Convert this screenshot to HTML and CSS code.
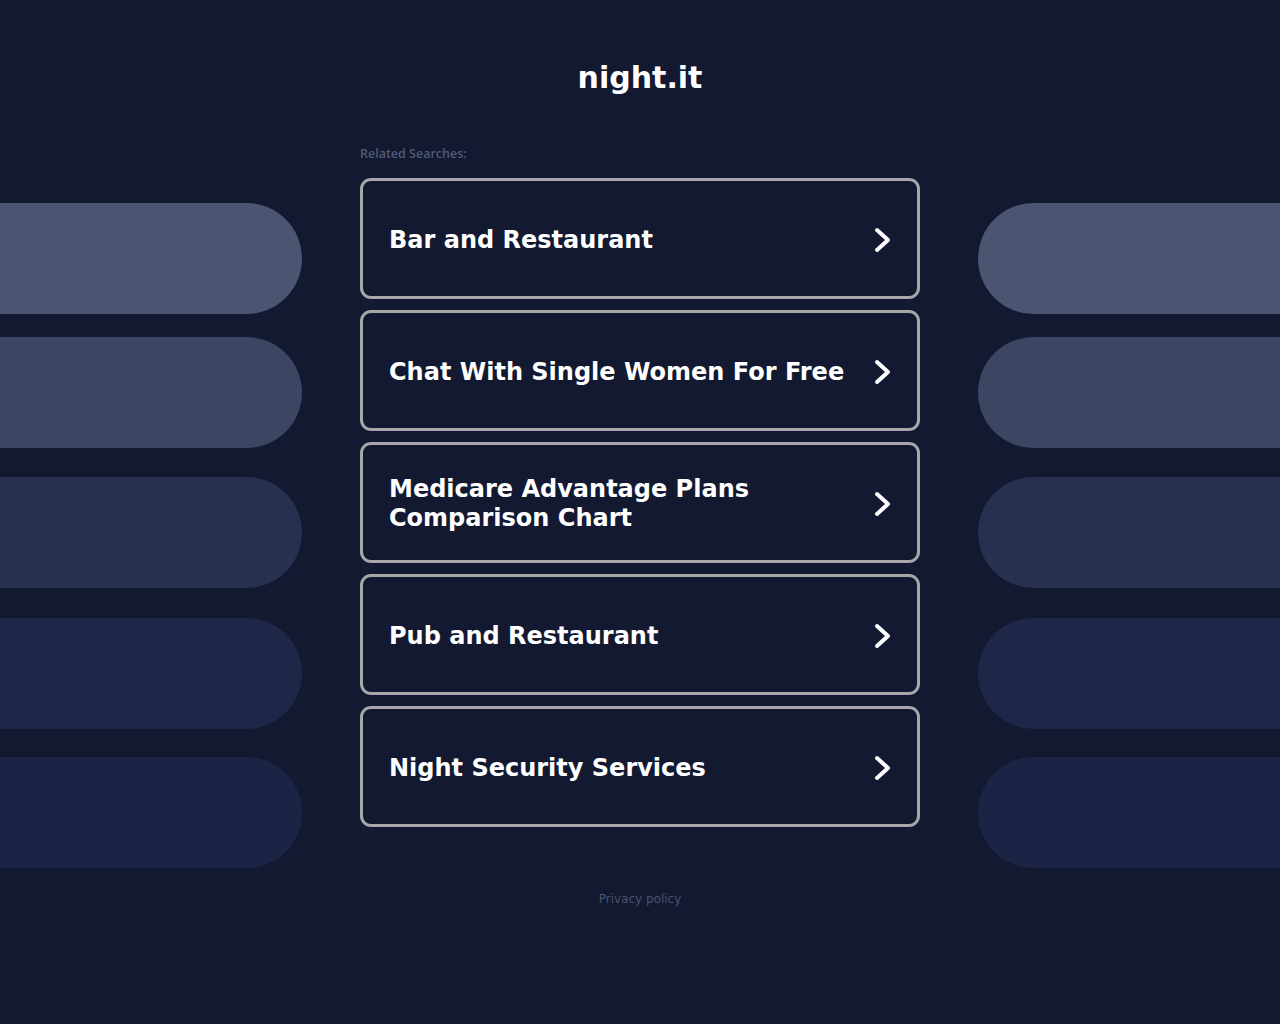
FILE: index.html
```html
<!DOCTYPE html>
<html lang="en">
<head>
<meta charset="utf-8">
<title>night.it</title>
<link rel="stylesheet" href="styles.css">
</head>
<body>
<div class="page">
  <aside class="deco deco-left">
    <div class="pill p1"></div>
    <div class="pill p2"></div>
    <div class="pill p3"></div>
    <div class="pill p4"></div>
    <div class="pill p5"></div>
  </aside>
  <main class="center">
    <h1 class="title">night.it</h1>
    <p class="label">Related Searches:</p>
    <div class="cards">
      <a class="card" href="#"><span class="card-text">Bar and Restaurant</span><svg class="chev" width="20" height="28" viewBox="0 0 20 28"><polyline points="4,4 15,14 4,24" fill="none" stroke="#fff" stroke-width="4" stroke-linecap="round" stroke-linejoin="round"/></svg></a>
      <a class="card" href="#"><span class="card-text">Chat With Single Women For Free</span><svg class="chev" width="20" height="28" viewBox="0 0 20 28"><polyline points="4,4 15,14 4,24" fill="none" stroke="#fff" stroke-width="4" stroke-linecap="round" stroke-linejoin="round"/></svg></a>
      <a class="card" href="#"><span class="card-text">Medicare Advantage Plans Comparison Chart</span><svg class="chev" width="20" height="28" viewBox="0 0 20 28"><polyline points="4,4 15,14 4,24" fill="none" stroke="#fff" stroke-width="4" stroke-linecap="round" stroke-linejoin="round"/></svg></a>
      <a class="card" href="#"><span class="card-text">Pub and Restaurant</span><svg class="chev" width="20" height="28" viewBox="0 0 20 28"><polyline points="4,4 15,14 4,24" fill="none" stroke="#fff" stroke-width="4" stroke-linecap="round" stroke-linejoin="round"/></svg></a>
      <a class="card" href="#"><span class="card-text">Night Security Services</span><svg class="chev" width="20" height="28" viewBox="0 0 20 28"><polyline points="4,4 15,14 4,24" fill="none" stroke="#fff" stroke-width="4" stroke-linecap="round" stroke-linejoin="round"/></svg></a>
    </div>
    <footer class="footer"><a href="#" class="privacy">Privacy policy</a></footer>
  </main>
  <aside class="deco deco-right">
    <div class="pill p1"></div>
    <div class="pill p2"></div>
    <div class="pill p3"></div>
    <div class="pill p4"></div>
    <div class="pill p5"></div>
  </aside>
</div>
</body>
</html>
```

FILE: styles.css
```css
html, body {
  margin: 0;
  padding: 0;
  background: #121930;
  height: 100%;
}
body {
  font-family: "DejaVu Sans", sans-serif;
  color: #fff;
}
.page {
  display: grid;
  grid-template-columns: 302px 1fr 302px;
  min-height: 1024px;
}
.deco {
  display: flex;
  flex-direction: column;
  padding-top: 203px;
}
.pill {
  height: 111px;
}
.deco-left .pill { border-radius: 0 56px 56px 0; }
.deco-right .pill { border-radius: 56px 0 0 56px; }
.p1 { background: #4b5572; }
.p2 { background: #3c4562; margin-top: 23px; }
.p3 { background: #283050; margin-top: 29px; }
.p4 { background: #1f2748; margin-top: 30px; }
.p5 { background: #1c2446; margin-top: 28px; }

.center {
  padding: 0 58px;
  display: flex;
  flex-direction: column;
}
.title {
  margin: 61px 0 0;
  font-size: 30px;
  font-weight: bold;
  line-height: 34px;
  text-align: center;
  color: #fff;
}
.label {
  margin: 51px 0 0;
  font-family: "Open Sans", sans-serif;
  font-size: 12.5px;
  font-weight: 600;
  line-height: 16px;
  color: #505979;
}
.cards {
  margin-top: 16px;
  display: flex;
  flex-direction: column;
  gap: 11px;
}
.card {
  box-sizing: border-box;
  height: 121px;
  border: 3px solid #a7a7aa;
  border-radius: 11px;
  display: flex;
  align-items: center;
  justify-content: space-between;
  padding: 3px 24px 0 26px;
  text-decoration: none;
  color: #fff;
}
.card-text {
  font-size: 24px;
  font-weight: bold;
  line-height: 29px;
  max-width: 470px;
}
.chev {
  flex: none;
  display: block;
}
.footer {
  margin-top: 61px;
  text-align: center;
}
.privacy {
  font-size: 12px;
  line-height: 14px;
  color: #4a536e;
  text-decoration: none;
}
```
